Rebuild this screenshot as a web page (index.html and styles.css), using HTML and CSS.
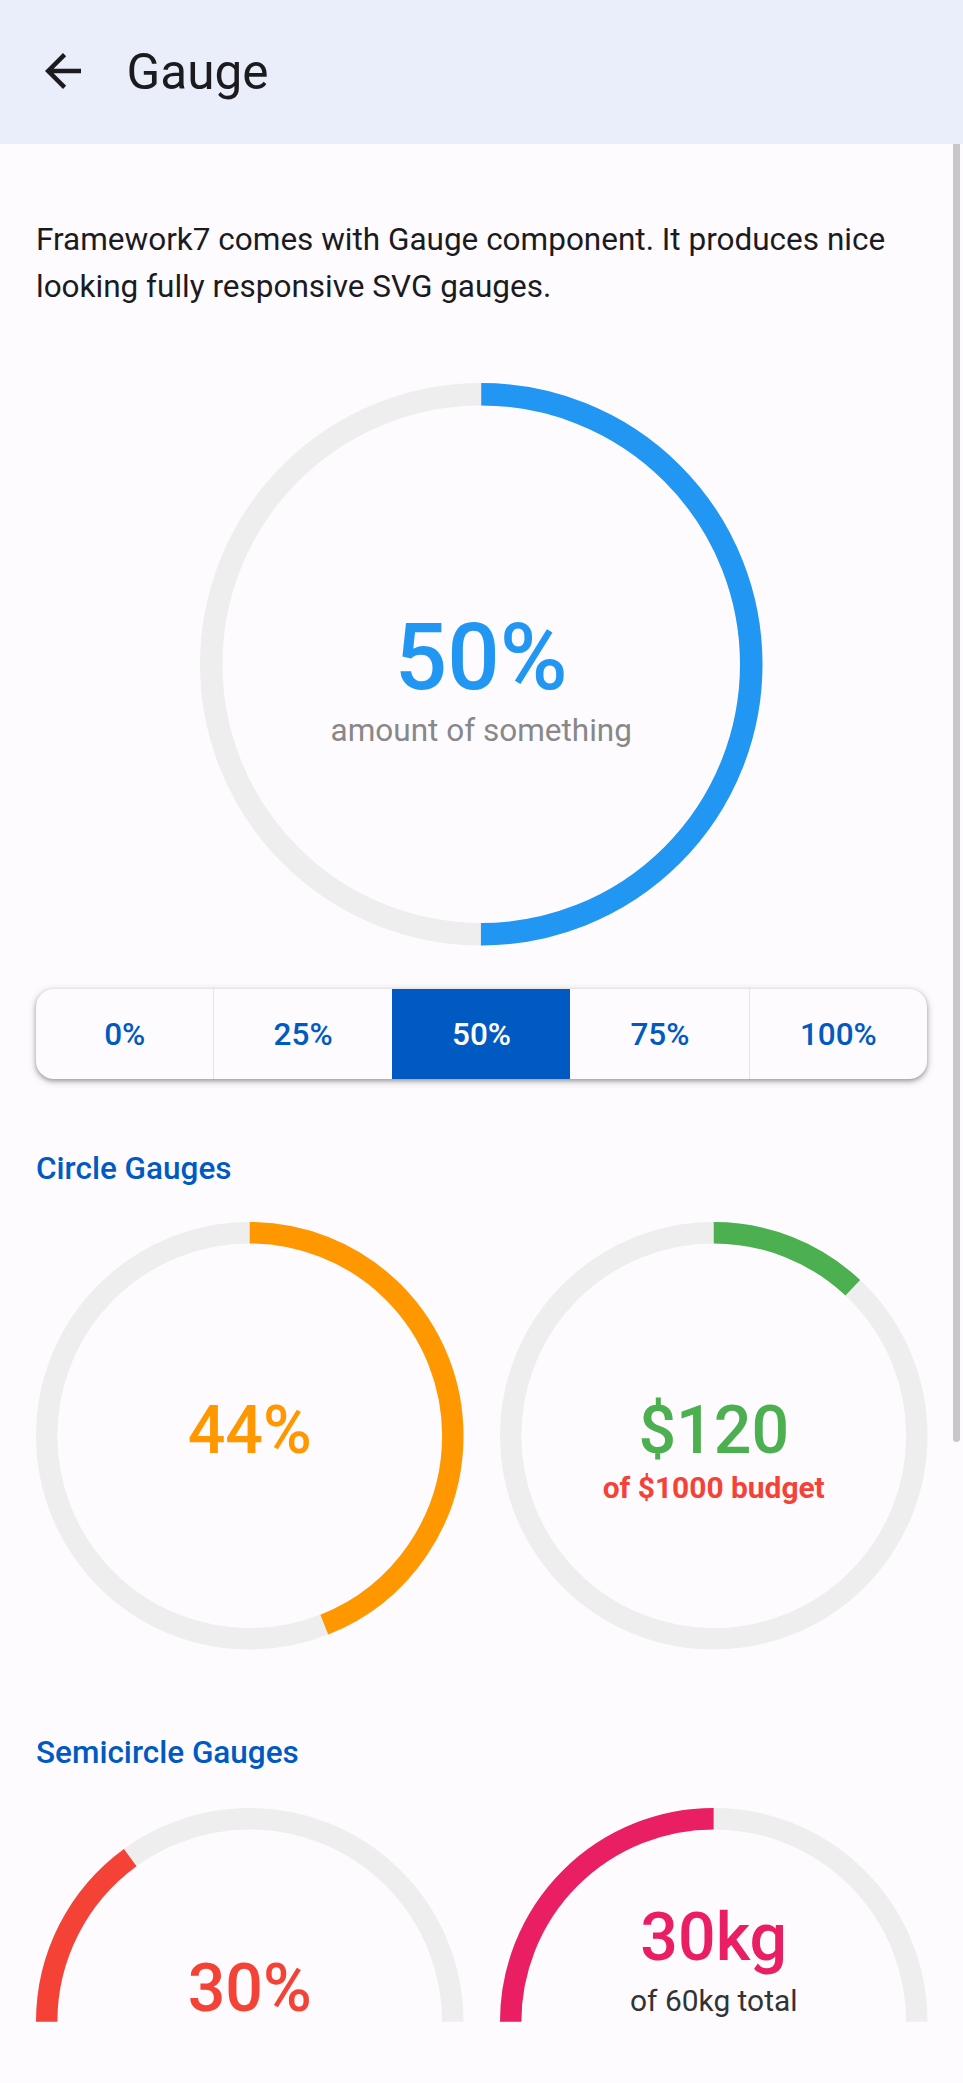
FILE: index.html
```html
<!DOCTYPE html>
<html lang="en">
<head>
<meta charset="utf-8">
<title>Gauge</title>
<link rel="stylesheet" href="styles.css">
</head>
<body>
<div class="page">
  <header class="navbar">
    <a class="back" aria-label="Back">
      <svg class="back-icon" viewBox="0 -960 960 960"><path d="M313-440 536-217l-56 57-320-320 320-320 56 57-223 223h487v80H313Z"/></svg>
    </a>
    <div class="title">Gauge</div>
  </header>

  <main class="content">
    <div class="block intro">
      <p>Framework7 comes with Gauge component. It produces nice looking fully responsive SVG gauges.</p>
    </div>

    <div class="block demo">
      <svg class="gauge-svg gauge-main" viewBox="0 0 250 250">
        <circle cx="125" cy="125" r="120" fill="none" stroke="#eeeeee" stroke-width="10"></circle>
        <circle cx="125" cy="125" r="120" fill="none" stroke="#2196f3" stroke-width="10" transform="rotate(-90 125 125)" stroke-dasharray="753.98" stroke-dashoffset="376.99"></circle>
        <text class="g-value" x="125" y="125" font-size="41" fill="#2196f3" text-anchor="middle" dominant-baseline="middle">50%</text>
        <text class="g-label" x="125" y="125" dy="30.5" font-size="14" fill="#888888" text-anchor="middle" dominant-baseline="middle">amount of something</text>
      </svg>

      <div class="segmented">
        <button class="seg-btn">0%</button>
        <button class="seg-btn">25%</button>
        <button class="seg-btn active">50%</button>
        <button class="seg-btn">75%</button>
        <button class="seg-btn">100%</button>
      </div>
    </div>

    <div class="block-title">Circle Gauges</div>
    <div class="block gauges-grid circle-row">
      <svg class="gauge-svg" viewBox="0 0 200 200">
        <circle cx="100" cy="100" r="95" fill="none" stroke="#eeeeee" stroke-width="10"></circle>
        <circle cx="100" cy="100" r="95" fill="none" stroke="#ff9800" stroke-width="10" transform="rotate(-90 100 100)" stroke-dasharray="596.90" stroke-dashoffset="334.27"></circle>
        <text class="g-value" x="100" y="100" font-size="31" fill="#ff9800" text-anchor="middle" dominant-baseline="middle">44%</text>
      </svg>
      <svg class="gauge-svg" viewBox="0 0 200 200">
        <circle cx="100" cy="100" r="95" fill="none" stroke="#eeeeee" stroke-width="10"></circle>
        <circle cx="100" cy="100" r="95" fill="none" stroke="#4caf50" stroke-width="10" transform="rotate(-90 100 100)" stroke-dasharray="596.90" stroke-dashoffset="525.27"></circle>
        <text class="g-value" x="100" y="100" font-size="31" fill="#4caf50" text-anchor="middle" dominant-baseline="middle">$120</text>
        <text class="g-label g-bold" x="100" y="100" dy="25.5" font-size="14" fill="#f44336" text-anchor="middle" dominant-baseline="middle">of $1000 budget</text>
      </svg>
    </div>

    <div class="block-title semi-title">Semicircle Gauges</div>
    <div class="block gauges-grid semi-row">
      <svg class="gauge-svg" viewBox="0 0 200 100">
        <path d="M195,100 a1,1 0 0,0 -190,0" fill="none" stroke="#eeeeee" stroke-width="10"></path>
        <path d="M195,100 a1,1 0 0,0 -190,0" fill="none" stroke="#f44336" stroke-width="10" stroke-dasharray="298.45" stroke-dashoffset="387.98"></path>
        <text class="g-value" x="100" y="100" dy="-5" font-size="31" fill="#f44336" text-anchor="middle">30%</text>
      </svg>
      <svg class="gauge-svg" viewBox="0 0 200 100">
        <path d="M195,100 a1,1 0 0,0 -190,0" fill="none" stroke="#eeeeee" stroke-width="10"></path>
        <path d="M195,100 a1,1 0 0,0 -190,0" fill="none" stroke="#e91e63" stroke-width="10" stroke-dasharray="298.45" stroke-dashoffset="447.68"></path>
        <text class="g-value" x="100" y="100" dy="-29" font-size="31" fill="#e91e63" text-anchor="middle">30kg</text>
        <text class="g-label" x="100" y="100" dy="-5" font-size="14" fill="#333333" text-anchor="middle">of 60kg total</text>
      </svg>
    </div>
  </main>

  <div class="scrollbar"></div>
</div>
</body>
</html>
```

FILE: styles.css
```css
* {
  box-sizing: border-box;
}

html, body {
  margin: 0;
  padding: 0;
}

body {
  background: #fefbff;
  font-family: Roboto, "Noto Sans", "Liberation Sans", sans-serif;
  color: #1b1b1f;
}

.page {
  position: relative;
  width: 963px;
  height: 2083px;
  overflow: hidden;
  background: #fefbff;
}

.navbar {
  height: 144px;
  background: #e9eefa;
  display: flex;
  align-items: center;
  padding-left: 36px;
}

.back {
  display: flex;
  width: 54px;
  height: 54px;
  align-items: center;
  justify-content: center;
  margin-top: -2px;
}

.back-icon {
  width: 54px;
  height: 54px;
  fill: #1b1b1f;
}

.title {
  margin-left: 36.5px;
  font-size: 49.5px;
  line-height: 58px;
  font-weight: 400;
  color: #1b1b1f;
}

.content {
  padding: 0 36px;
}

.block {
  margin: 0;
}

.intro {
  margin-top: 72px;
}

.intro p {
  margin: 0;
  font-size: 31.5px;
  line-height: 47.25px;
  color: #1b1b1f;
}

.demo {
  margin-top: 72px;
}

.gauge-svg {
  display: block;
  overflow: visible;
}

.gauge-svg text {
  font-family: Roboto, "Noto Sans", "Liberation Sans", sans-serif;
}

.g-value {
  font-weight: 500;
}

.g-label {
  font-weight: 400;
}

.g-bold {
  font-weight: 700;
}

.gauge-main {
  width: 562.5px;
  height: 562.5px;
  margin: 0 auto;
}

.segmented {
  margin-top: 44px;
  height: 90px;
  display: flex;
  border-radius: 18px;
  overflow: hidden;
  background: #fefbff;
  box-shadow: 0 2px 4.5px rgba(0, 0, 0, 0.3), 0 2px 7px 2px rgba(0, 0, 0, 0.12);
}

.seg-btn {
  flex: 1 1 0;
  border: 0;
  margin: 0;
  padding: 0;
  background: transparent;
  font-family: Roboto, "Noto Sans", "Liberation Sans", sans-serif;
  font-size: 31.5px;
  font-weight: 500;
  color: #005ac1;
  border-left: 1px solid #e4e4ea;
}

.seg-btn:first-child {
  border-left: 0;
}

.seg-btn.active {
  background: #005ac1;
  color: #ffffff;
  border-left-color: #005ac1;
}

.seg-btn.active + .seg-btn {
  border-left-color: transparent;
}

.block-title {
  margin-top: 70px;
  font-size: 31.5px;
  line-height: 40px;
  font-weight: 500;
  color: #005ac1;
}

.semi-title {
  margin-top: 83.5px;
}

.gauges-grid {
  display: grid;
  grid-template-columns: 1fr 1fr;
  column-gap: 36px;
}

.gauges-grid .gauge-svg {
  width: 100%;
  height: auto;
}

.circle-row {
  margin-top: 32.5px;
}

.semi-row {
  margin-top: 35px;
}

.scrollbar {
  position: absolute;
  top: 144px;
  right: 3px;
  width: 7px;
  height: 1298px;
  background: #c7c7c7;
  border-radius: 0 0 3.5px 3.5px;
}
```
